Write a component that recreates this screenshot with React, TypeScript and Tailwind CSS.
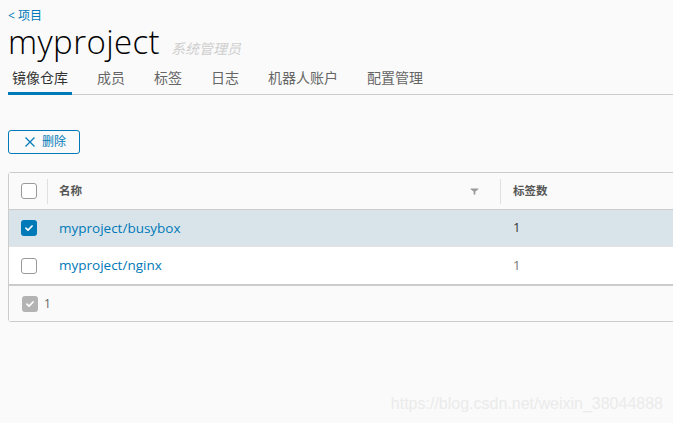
const TABS = ['镜像仓库', '成员', '标签', '日志', '机器人账户', '配置管理'];

const ROWS = [
  { name: 'myproject/busybox', tags: 1, selected: true },
  { name: 'myproject/nginx', tags: 1, selected: false },
];

function Check({ checked, muted }: { checked?: boolean; muted?: boolean }) {
  if (checked) {
    return (
      <span
        className={`flex h-4 w-4 items-center justify-center rounded-[3px] ${muted ? 'bg-[#b3b3b3]' : 'bg-[#0079b8]'}`}
      >
        <svg viewBox="0 0 12 12" className="h-[10px] w-[10px]">
          <path d="M2.3 6.2 L4.8 8.6 L9.7 3.6" fill="none" stroke="white" strokeWidth="2" strokeLinecap="round" strokeLinejoin="round" />
        </svg>
      </span>
    );
  }
  return <span className="block h-4 w-4 rounded-[3px] border border-[#9a9a9a] bg-white" />;
}

export default function App() {
  return (
    <div
      className="relative h-[423px] w-[673px] overflow-hidden bg-[#fafafa] text-[#565656]"
      style={{ fontFamily: '"Open Sans", "Noto Sans CJK SC", sans-serif' }}
    >
      <div className="pl-2">
        <div className="pt-[9px] text-[12px] leading-[13px] text-[#0079b8]">&lt; 项目</div>
        <div className="mt-[6px] flex items-baseline">
          <h1 className="text-[33px] font-light leading-[28px] tracking-[0.4px] text-black">myproject</h1>
          <span className="ml-[11px] text-[14px] italic text-[#cfcfcf]">系统管理员</span>
        </div>

        <div className="mt-[4px] flex w-[700px] gap-[21px] border-b border-[#cccccc]">
          {TABS.map((t, i) => (
            <div
              key={t}
              className={`-mb-px border-b-[3px] px-1 pb-[4px] pt-[5px] text-[14px] leading-[20px] ${
                i === 0 ? 'border-[#0079b8] text-[#333]' : 'border-transparent text-[#666]'
              }`}
            >
              {t}
            </div>
          ))}
        </div>

        <button className="mt-[35px] flex h-6 w-[72px] items-center gap-[7px] rounded-[3px] border border-[#0079b8] bg-transparent pl-[16px] text-[12px] text-[#0079b8]">
          <svg viewBox="0 0 10 10" className="h-[10px] w-[10px]">
            <path d="M0.5 0.5 L9.5 9.5 M9.5 0.5 L0.5 9.5" stroke="#0079b8" strokeWidth="1.2" />
          </svg>
          <span>删除</span>
        </button>

        <div className="mt-[18px] w-[700px] rounded-[3px] border border-[#cccccc] bg-white">
          <div className="flex h-[37px] items-center border-b border-[#cccccc] bg-[#fafafa] text-[11.5px] font-semibold text-[#565656]">
            <div className="flex w-[38px] justify-center pl-[1px]">
              <Check />
            </div>
            <div className="h-[25px] w-px bg-[#e0e0e0]" />
            <div className="flex w-[452px] items-center justify-between pl-[11px] pr-[21px]">
              <span>名称</span>
              <svg viewBox="0 0 10 8" className="h-[7px] w-[9px]">
                <path d="M0.5 0.5 H9.5 V1.5 L6 4 V7.5 H4 V4 L0.5 1.5 Z" fill="#9a9a9a" />
              </svg>
            </div>
            <div className="h-[25px] w-px bg-[#e0e0e0]" />
            <div className="pl-[12px]">标签数</div>
          </div>

          {ROWS.map((r, i) => (
            <div
              key={r.name}
              className={`flex h-[37px] items-center text-[13.5px] ${r.selected ? 'bg-[#d9e4ea]' : 'bg-white'} ${
                i === 0 ? 'border-b border-[#e3e3e3]' : ''
              }`}
            >
              <div className="flex w-[38px] justify-center pl-[1px]">
                <Check checked={r.selected} />
              </div>
              <div className="w-px" />
              <div className="w-[452px] pl-[11px] text-[#0079b8]">{r.name}</div>
              <div className="w-px" />
              <div className={`pl-[12px] text-[13px] ${r.selected ? 'text-[#333]' : 'text-[#777]'}`}>{r.tags}</div>
            </div>
          ))}

          <div className="flex h-[37px] items-center gap-[6px] border-t-2 border-[#cccccc] bg-[#fafafa] pl-[13px] text-[12px] text-[#666]">
            <Check checked muted />
            <span>1</span>
          </div>
        </div>
      </div>

      <div
        className="absolute right-[10px] top-[392px] text-[16px] text-[#ebebeb]"
        style={{ fontFamily: '"Liberation Sans", Arial, sans-serif' }}
      >
        https://blog.csdn.net/weixin_38044888
      </div>
    </div>
  );
}
